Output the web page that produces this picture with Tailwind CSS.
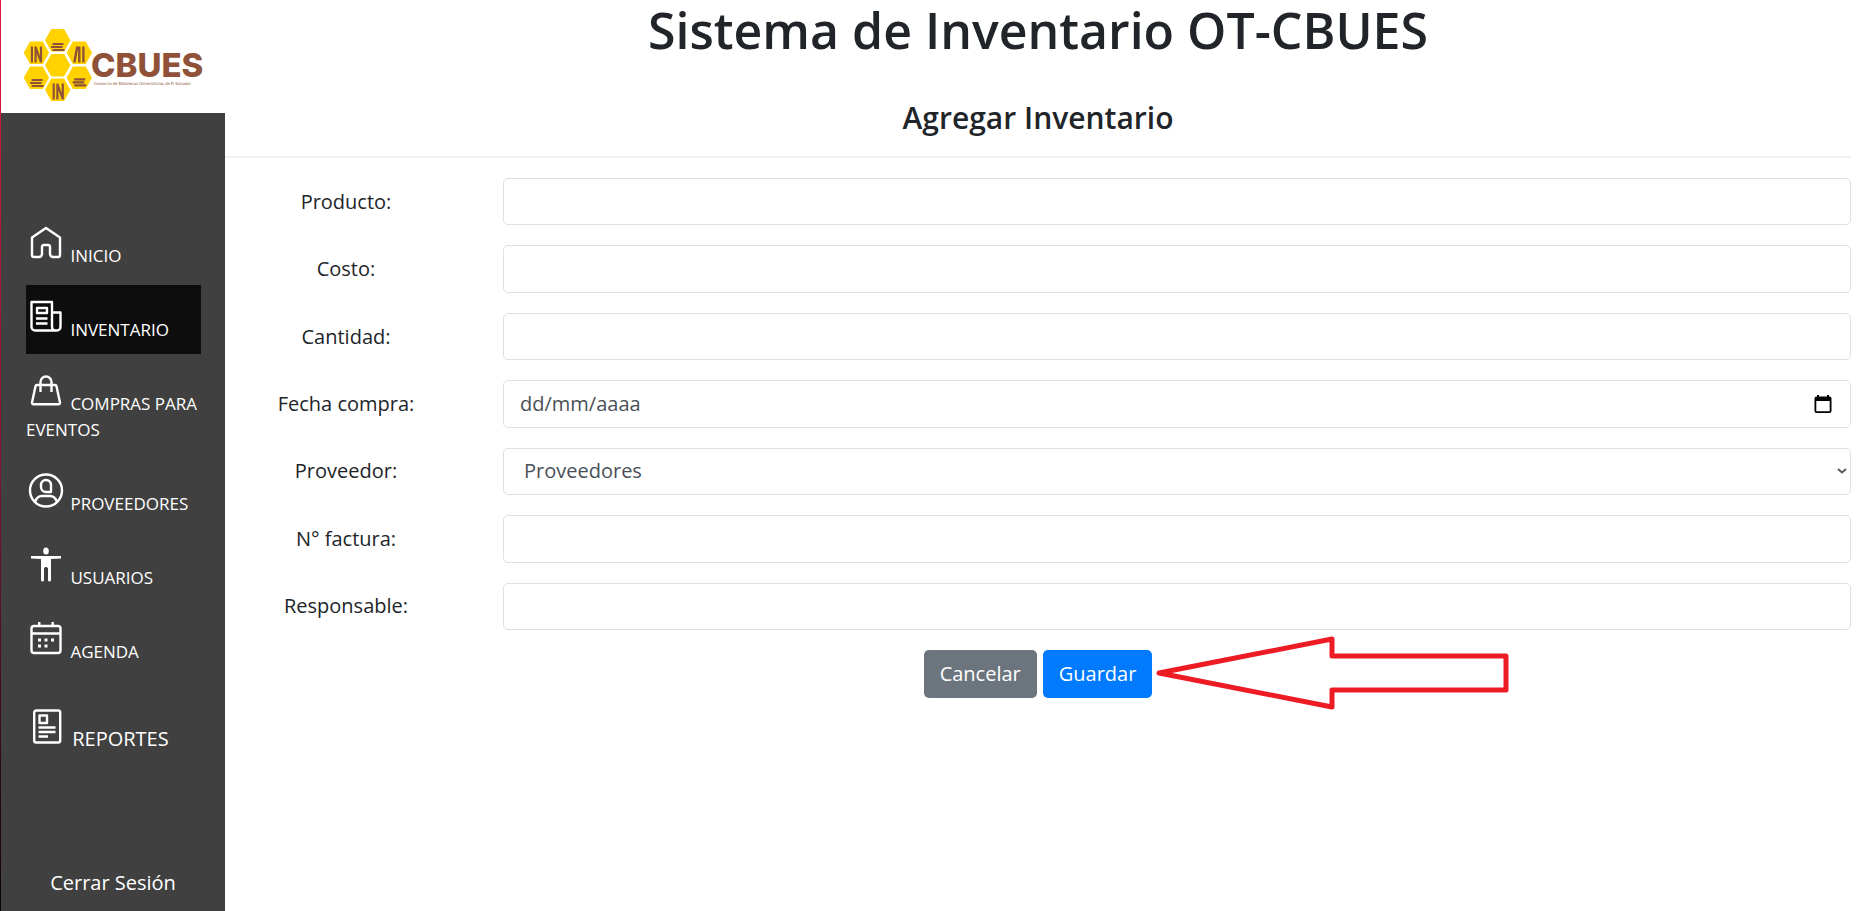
<!DOCTYPE html>
<html lang="es">
<head>
<meta charset="utf-8">
<meta name="viewport" content="width=device-width, initial-scale=1">
<title>Sistema de Inventario OT-CBUES</title>
<script src="https://cdn.jsdelivr.net/npm/@tailwindcss/browser@4"></script>
</head>
<body class="flex min-h-screen bg-white font-['Open_Sans',sans-serif] text-xl text-[#212529]">
  <div class="w-px shrink-0 bg-linear-to-b from-[#e6174a] via-[#84142f] to-[#0c0408]"></div>

  <aside class="flex w-56 shrink-0 flex-col bg-[#404040] text-white">
    <a href="#" class="block h-[113px] bg-white" aria-label="CBUES">
      <svg class="block h-[113px] w-56" viewBox="1 0 224 113">
        <defs>
          <path id="hex" d="M-12.7 0 L-6.4 -11.2 H6.4 L12.7 0 L6.4 11.2 H-6.4 Z"/>
          <path id="in" d="M-4.5 -8 V8 M-0.8 -8 V8 M-0.8 -7.5 L4.5 7.5 M4.6 -8 V8"/>
          <path id="stack" d="M-5 -4 H6 M-6.5 -1 H5 M-5 2 H7"/>
        </defs>
        <g fill="#ffd200">
          <use href="#hex" x="57.7" y="40.2"/><use href="#hex" x="57.7" y="65.2"/><use href="#hex" x="57.7" y="89.8"/>
          <use href="#hex" x="36.4" y="52.8"/><use href="#hex" x="79.3" y="52.8"/>
          <use href="#hex" x="36.4" y="77.7"/><use href="#hex" x="79.3" y="77.7"/>
        </g>
        <g stroke="#8f5238" stroke-width="2.2" fill="none">
          <use href="#in" x="36.4" y="54.5"/><use href="#in" x="58.2" y="91.5"/>
          <path d="M77.3 46.5 L74.3 62.500 M79.300 46.5 V62.500 M83.4 46.5 V62.500" stroke-width="2.400"/>
          <use href="#stack" x="57.5" y="48"/><use href="#stack" x="36.6" y="84"/><use href="#stack" x="79.2" y="83.3"/>
        </g>
        <text x="91" y="77" fill="#8f5238" class="font-[Inter,sans-serif] text-[33px] font-extrabold">CBUES</text>
        <text x="94" y="85" fill="#8f5238" class="font-['DejaVu_Sans_Condensed','Liberation_Sans',sans-serif] text-[4px]">Consorcio de Bibliotecas Universitarias de El Salvador</text>
      </svg>
    </a>

    <nav class="mx-[25px] mt-[98px] flex w-[175px] flex-col gap-[5px] text-[17px] leading-[26px]">
      <a href="#" class="block py-[11px]"><svg class="inline size-10 align-baseline" viewBox="0 0 40 40" fill="none" stroke="#fff" stroke-width="2.4" stroke-linejoin="round"><path d="M20 6 L6 15.5 V33 a2 2 0 0 0 2 2 h5 a3 3 0 0 0 3-3 v-7 a2 2 0 0 1 2-2 h4 a2 2 0 0 1 2 2 v7 a3 3 0 0 0 3 3 h5 a2 2 0 0 0 2-2 V15.500 Z"/></svg> INICIO</a>
      <a href="#" class="block bg-[#0d0d0d] py-[11px]" aria-current="page"><svg class="inline size-10 align-baseline" viewBox="0 0 40 40" fill="none" stroke="#fff" stroke-width="2.4" stroke-linejoin="round"><path d="M29.500 34.500 H9 a3.500 3.500 0 0 1-3.500-3.500 V6 H26 V31 a3.500 3.500 0 0 0 3.500 3.500 H31 a3.500 3.500 0 0 0 3.500-3.500 V16.500 H26"/><path d="M11 12 H21 V17 H11 Z M10 22.500 H21.500 M10 27.500 H21.500"/></svg> INVENTARIO</a>
      <a href="#" class="block py-[11px]"><svg class="inline size-10 align-baseline" viewBox="0 0 40 40" fill="none" stroke="#fff" stroke-width="2.4" stroke-linejoin="round"><path d="M11 15 H29 a1.500 1.500 0 0 1 1.500 1.200 L34 32.500 a1.500 1.500 0 0 1-1.500 1.800 H7.500 a1.500 1.500 0 0 1-1.500-1.800 L9.500 16.200 A1.500 1.500 0 0 1 11 15 Z M14.500 22 V12 a5.500 5.500 0 0 1 11 0 V22"/></svg> COMPRAS PARA EVENTOS</a>
      <a href="#" class="block py-[11px]"><svg class="inline size-10 align-baseline" viewBox="0 0 40 40" fill="none" stroke="#fff" stroke-width="2.4" stroke-linejoin="round"><circle cx="20" cy="20.500" r="16"/><path d="M20 10 a5 5 0 0 1 5 5 v7 h-5 a5 5 0 0 1-5-5 v-2 a5 5 0 0 1 5-5 Z M9 32 c1.500-4.500 4-6 7-6 h8 c3 0 5.500 1.500 7 6"/></svg> PROVEEDORES</a>
      <a href="#" class="block py-[11px]"><svg class="inline size-10 align-baseline" viewBox="0 0 40 40" fill="#fff"><ellipse cx="20" cy="7" rx="2.800" ry="3.500"/><path d="M5 12 H35 V14.500 L25 15 V36 a1.500 1.500 0 0 1-3 0 V24 h-.5 l-.5-1 h-2 l-.5 1 h-.5 V36 a1.500 1.500 0 0 1-3 0 V15 L5 14.500 Z"/></svg> USUARIOS</a>
      <a href="#" class="block py-[11px]"><svg class="inline size-10 align-baseline" viewBox="0 0 40 40" fill="none" stroke="#fff" stroke-width="2.4" stroke-linejoin="round"><rect x="5.500" y="8" width="29" height="27" rx="2.500"/><path d="M5.500 15.500 H34.500 M13.300 4 V8 M26.700 4 V8"/><path stroke-width="3.200" d="M12 22 h3 M18.500 22 h3 M25 22 h3 M12 28 h3 M18.500 28 h3"/></svg> AGENDA</a>
      <a href="#" class="mt-3.5 ml-px block py-[11px] text-xl leading-[26px]"><svg class="inline size-10 align-baseline" viewBox="0 0 40 40" fill="none" stroke="#fff" stroke-width="2.4" stroke-linejoin="round"><rect x="7.200" y="4.500" width="26" height="32" rx="2"/><path d="M12.500 9.500 H20 V17 H12.500 Z M11.500 21.500 H28.500 M11.500 26 H28.500 M11.500 30.500 H21"/></svg> REPORTES</a>
    </nav>

    <a href="#" class="mt-auto block pb-[13px] text-center leading-[30px]">Cerrar Sesión</a>
  </aside>

  <main class="min-w-0 flex-1 pr-[19px]">
    <h1 class="text-center text-[50px] leading-[60px] font-semibold">Sistema de Inventario OT-CBUES</h1>
    <h2 class="mt-10 text-center text-[30px] leading-9 font-semibold">Agregar Inventario</h2>
    <hr class="mt-5 border-t-2 border-[#f1f1f1]">

    <form class="mt-5">
      <div class="grid min-h-[452px] auto-rows-fr gap-5">
        <div class="grid grid-cols-[278px_1fr]">
          <label for="producto" class="self-center pr-9 text-center">Producto:</label>
          <input id="producto" type="text" class="w-full rounded-[5px] border border-[#dde1e6] px-4">
        </div>
        <div class="grid grid-cols-[278px_1fr]">
          <label for="costo" class="self-center pr-9 text-center">Costo:</label>
          <input id="costo" type="text" class="w-full rounded-[5px] border border-[#dde1e6] px-4">
        </div>
        <div class="grid grid-cols-[278px_1fr]">
          <label for="cantidad" class="self-center pr-9 text-center">Cantidad:</label>
          <input id="cantidad" type="text" class="w-full rounded-[5px] border border-[#dde1e6] px-4">
        </div>
        <div class="grid grid-cols-[278px_1fr]">
          <label for="fecha" class="self-center pr-9 text-center">Fecha compra:</label>
          <div class="relative grid">
            <input id="fecha" type="text" placeholder="dd/mm/aaaa" class="w-full rounded-[5px] border border-[#dde1e6] px-4 placeholder:text-[#495057]">
            <button type="button" aria-label="Abrir calendario" class="absolute top-1/2 right-[19px] -translate-y-1/2">
              <svg class="block h-5 w-[18px]" viewBox="0 0 18 20"><path fill="#000" fill-rule="evenodd" d="M3 1 H5 V2.500 H13 V1 H15 V2.500 H15.500 a2 2 0 0 1 2 2 V17 a2 2 0 0 1-2 2 H2.500 a2 2 0 0 1-2-2 V4.500 a2 2 0 0 1 2-2 H3 Z M2.300 7 V17.200 H15.700 V7 Z"/></svg>
            </button>
          </div>
        </div>
        <div class="grid grid-cols-[278px_1fr]">
          <label for="proveedor" class="self-center pr-9 text-center">Proveedor:</label>
          <div class="relative grid">
            <select id="proveedor" class="w-full appearance-none rounded-[5px] border border-[#dde1e6] bg-white px-5 text-[#495057]">
              <option>Proveedores</option>
            </select>
            <svg class="pointer-events-none absolute top-1/2 right-1 h-2 w-2.5 -translate-y-1/2" viewBox="0 0 10 8" fill="none" stroke="#555" stroke-width="1.800"><path d="M1 2 L5 5.500 L9 2"/></svg>
          </div>
        </div>
        <div class="grid grid-cols-[278px_1fr]">
          <label for="factura" class="self-center pr-9 text-center">N° factura:</label>
          <input id="factura" type="text" class="w-full rounded-[5px] border border-[#dde1e6] px-4">
        </div>
        <div class="grid grid-cols-[278px_1fr]">
          <label for="responsable" class="self-center pr-9 text-center">Responsable:</label>
          <input id="responsable" type="text" class="w-full rounded-[5px] border border-[#dde1e6] px-4">
        </div>
      </div>

      <div class="mt-5 flex justify-center">
        <div class="relative flex gap-1.5">
          <button type="button" class="h-12 rounded-[5px] bg-[#6c757d] px-4 text-white">Cancelar</button>
          <button type="submit" class="h-12 rounded-[5px] bg-[#007bff] px-4 text-white">Guardar</button>
          <!-- Arrow pointing at the save button -->
          <svg class="pointer-events-none absolute top-1/2 left-full ml-1 h-[76px] w-[354px] -translate-y-1/2" viewBox="0 0 354 76" fill="none" stroke="#ed1c24" stroke-width="5" stroke-linejoin="round"><path d="M3 37 L176 3 V20 H350 V54 H176 V71 Z"/></svg>
        </div>
      </div>
    </form>
  </main>
</body>
</html>
